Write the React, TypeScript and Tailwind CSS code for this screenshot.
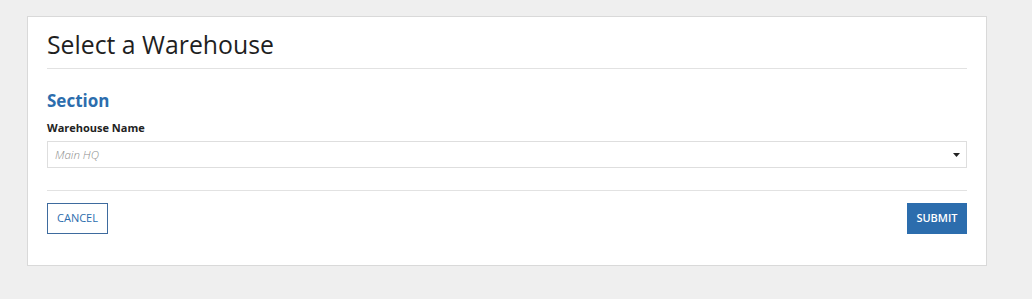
import React from 'react';

function CaretDown() {
  return (
    <svg width="7" height="4" viewBox="0 0 7 4" className="text-[#222]">
      <path d="M0 0h7L3.5 4z" fill="currentColor" />
    </svg>
  );
}

export default function App() {
  return (
    <div
      className="min-h-[299px] w-full bg-[#efefef] pt-4 pl-[27px]"
      style={{ fontFamily: '"Open Sans", "Noto Sans", sans-serif' }}
    >
      <div className="w-[960px] border border-[#d9d9d9] bg-white px-[19px] pb-[31px]">
        <div className="border-b border-[#e2e2e2] pt-3 pb-[9px]">
          <h1 className="text-[24.8px] leading-[30px] text-[#1f1f1f]">Select a Warehouse</h1>
        </div>

        <section className="mt-5">
          <h2 className="text-[17px] font-bold leading-[24px] text-[#2c6dad]">Section</h2>
          <label className="mt-[7px] block text-[11px] font-bold leading-4 text-[#222]">Warehouse Name</label>
          <div className="mt-[5px] flex h-[27px] items-center justify-between border border-[#dedede] bg-white pl-[7px] pr-[6px]">
            <span className="text-[11.5px] font-light italic text-[#8c8c8c]">Main HQ</span>
            <CaretDown />
          </div>
        </section>

        <div className="mt-[22px] border-t border-[#e2e2e2] pt-3">
          <div className="flex items-center justify-between">
            <button className="h-[31px] w-[61px] border border-[#3e6b9e] bg-white text-[11px] font-medium uppercase text-[#2c6dad]">
              Cancel
            </button>
            <button className="h-[31px] w-[60px] bg-[#2c6dad] text-[11px] font-semibold uppercase text-white">
              Submit
            </button>
          </div>
        </div>
      </div>
    </div>
  );
}
